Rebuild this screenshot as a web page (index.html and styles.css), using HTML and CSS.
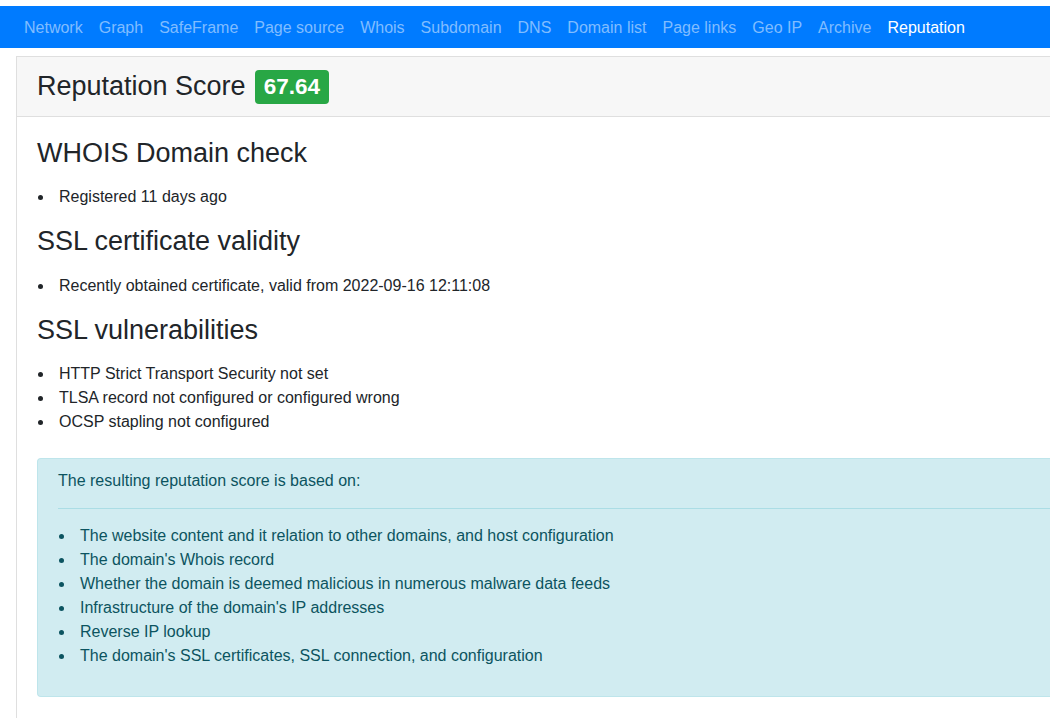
FILE: index.html
```html
<!DOCTYPE html>
<html lang="en">
<head>
<meta charset="utf-8">
<title>Reputation</title>
<link rel="stylesheet" href="styles.css">
</head>
<body>
<nav class="navbar">
  <a class="nav-link" href="#">Network</a>
  <a class="nav-link" href="#">Graph</a>
  <a class="nav-link" href="#">SafeFrame</a>
  <a class="nav-link" href="#">Page source</a>
  <a class="nav-link" href="#">Whois</a>
  <a class="nav-link" href="#">Subdomain</a>
  <a class="nav-link" href="#">DNS</a>
  <a class="nav-link" href="#">Domain list</a>
  <a class="nav-link" href="#">Page links</a>
  <a class="nav-link" href="#">Geo IP</a>
  <a class="nav-link" href="#">Archive</a>
  <a class="nav-link active" href="#">Reputation</a>
</nav>
<div class="card">
  <div class="card-header">
    <h3 class="header-title">Reputation Score <span class="badge">67.64</span></h3>
  </div>
  <div class="card-body">
    <h3 class="section-title">WHOIS Domain check</h3>
    <ul class="list">
      <li>Registered 11 days ago</li>
    </ul>
    <h3 class="section-title">SSL certificate validity</h3>
    <ul class="list">
      <li>Recently obtained certificate, valid from 2022-09-16 12:11:08</li>
    </ul>
    <h3 class="section-title">SSL vulnerabilities</h3>
    <ul class="list">
      <li>HTTP Strict Transport Security not set</li>
      <li>TLSA record not configured or configured wrong</li>
      <li>OCSP stapling not configured</li>
    </ul>
    <div class="alert">
      <p class="alert-lead">The resulting reputation score is based on:</p>
      <hr class="alert-rule">
      <ul class="list">
        <li>The website content and it relation to other domains, and host configuration</li>
        <li>The domain's Whois record</li>
        <li>Whether the domain is deemed malicious in numerous malware data feeds</li>
        <li>Infrastructure of the domain's IP addresses</li>
        <li>Reverse IP lookup</li>
        <li>The domain's SSL certificates, SSL connection, and configuration</li>
      </ul>
    </div>
  </div>
</div>
</body>
</html>
```

FILE: styles.css
```css
html, body {
  margin: 0;
  padding: 0;
  overflow: hidden;
  background: #ffffff;
}

body {
  font-family: "Liberation Sans", Arial, sans-serif;
  font-size: 16px;
  line-height: 24px;
  color: #212529;
  padding-top: 6px;
}

.navbar {
  display: flex;
  align-items: center;
  height: 42px;
  padding: 0 16px;
  background: #007bff;
}

.nav-link {
  padding: 2px 8px 0;
  color: #80bdff;
  text-decoration: none;
  white-space: nowrap;
}

.nav-link.active {
  color: #ffffff;
}

.card {
  margin: 8px -80px 0 16px;
  border: 1px solid #dfdfdf;
  border-right: none;
  background: #ffffff;
  min-height: 700px;
}

.card-header {
  display: flex;
  align-items: center;
  height: 59px;
  padding: 0 20px;
  background: #f7f7f7;
  border-bottom: 1px solid #dfdfdf;
}

.header-title {
  display: flex;
  align-items: center;
  gap: 9px;
  margin: 0;
  font-size: 27px;
  font-weight: 400;
  line-height: 35px;
}

.badge {
  display: inline-block;
  padding: 6px 9px;
  font-size: 22.5px;
  font-weight: 700;
  line-height: 22px;
  color: #ffffff;
  background: #28a745;
  border-radius: 4px;
}

.card-body {
  padding: 20px 20px;
}

.section-title {
  margin: 0 0 16px;
  font-size: 27px;
  font-weight: 400;
  line-height: 1.2;
}

.list {
  margin: 0 0 16px;
  padding-left: 22px;
  list-style: none;
}

.list li {
  position: relative;
}

.list li::before {
  content: "";
  position: absolute;
  left: -21px;
  top: 10px;
  width: 5px;
  height: 5px;
  border-radius: 50%;
  background: currentColor;
}

.alert {
  margin-top: 24px;
  padding: 10px 20px 12px;
  background: #d1ecf1;
  border: 1px solid #bee5eb;
  border-right: none;
  border-radius: 4px 0 0 4px;
  color: #0c5460;
}

.alert-lead {
  margin: 0;
}

.alert-rule {
  margin: 15px 0 15px;
  border: 0;
  border-top: 1px solid #abdde5;
}
```
